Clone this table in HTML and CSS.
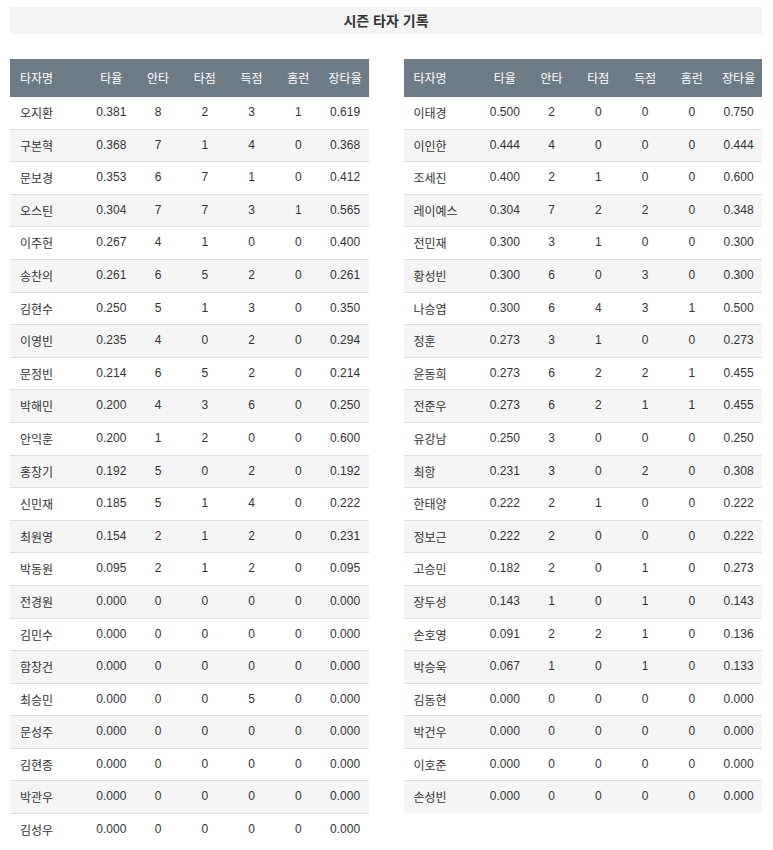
FILE: index.html
```html
<!DOCTYPE html>
<html lang="ko">
<head>
<meta charset="utf-8">
<title>시즌 타자 기록</title>
<link rel="stylesheet" href="styles.css">
</head>
<body>
<div class="page">
  <h1 class="title">시즌 타자 기록</h1>
  <div class="tables">
    <table class="stats">
      <colgroup><col class="c-name"><col><col><col><col><col><col></colgroup>
      <thead><tr><th class="name">타자명</th><th>타율</th><th>안타</th><th>타점</th><th>득점</th><th>홈런</th><th>장타율</th></tr></thead>
      <tbody>
        <tr><td class="name">오지환</td><td>0.381</td><td>8</td><td>2</td><td>3</td><td>1</td><td>0.619</td></tr>
        <tr><td class="name">구본혁</td><td>0.368</td><td>7</td><td>1</td><td>4</td><td>0</td><td>0.368</td></tr>
        <tr><td class="name">문보경</td><td>0.353</td><td>6</td><td>7</td><td>1</td><td>0</td><td>0.412</td></tr>
        <tr><td class="name">오스틴</td><td>0.304</td><td>7</td><td>7</td><td>3</td><td>1</td><td>0.565</td></tr>
        <tr><td class="name">이주헌</td><td>0.267</td><td>4</td><td>1</td><td>0</td><td>0</td><td>0.400</td></tr>
        <tr><td class="name">송찬의</td><td>0.261</td><td>6</td><td>5</td><td>2</td><td>0</td><td>0.261</td></tr>
        <tr><td class="name">김현수</td><td>0.250</td><td>5</td><td>1</td><td>3</td><td>0</td><td>0.350</td></tr>
        <tr><td class="name">이영빈</td><td>0.235</td><td>4</td><td>0</td><td>2</td><td>0</td><td>0.294</td></tr>
        <tr><td class="name">문정빈</td><td>0.214</td><td>6</td><td>5</td><td>2</td><td>0</td><td>0.214</td></tr>
        <tr><td class="name">박해민</td><td>0.200</td><td>4</td><td>3</td><td>6</td><td>0</td><td>0.250</td></tr>
        <tr><td class="name">안익훈</td><td>0.200</td><td>1</td><td>2</td><td>0</td><td>0</td><td>0.600</td></tr>
        <tr><td class="name">홍창기</td><td>0.192</td><td>5</td><td>0</td><td>2</td><td>0</td><td>0.192</td></tr>
        <tr><td class="name">신민재</td><td>0.185</td><td>5</td><td>1</td><td>4</td><td>0</td><td>0.222</td></tr>
        <tr><td class="name">최원영</td><td>0.154</td><td>2</td><td>1</td><td>2</td><td>0</td><td>0.231</td></tr>
        <tr><td class="name">박동원</td><td>0.095</td><td>2</td><td>1</td><td>2</td><td>0</td><td>0.095</td></tr>
        <tr><td class="name">전경원</td><td>0.000</td><td>0</td><td>0</td><td>0</td><td>0</td><td>0.000</td></tr>
        <tr><td class="name">김민수</td><td>0.000</td><td>0</td><td>0</td><td>0</td><td>0</td><td>0.000</td></tr>
        <tr><td class="name">함창건</td><td>0.000</td><td>0</td><td>0</td><td>0</td><td>0</td><td>0.000</td></tr>
        <tr><td class="name">최승민</td><td>0.000</td><td>0</td><td>0</td><td>5</td><td>0</td><td>0.000</td></tr>
        <tr><td class="name">문성주</td><td>0.000</td><td>0</td><td>0</td><td>0</td><td>0</td><td>0.000</td></tr>
        <tr><td class="name">김현종</td><td>0.000</td><td>0</td><td>0</td><td>0</td><td>0</td><td>0.000</td></tr>
        <tr><td class="name">박관우</td><td>0.000</td><td>0</td><td>0</td><td>0</td><td>0</td><td>0.000</td></tr>
        <tr><td class="name">김성우</td><td>0.000</td><td>0</td><td>0</td><td>0</td><td>0</td><td>0.000</td></tr>
      </tbody>
    </table>
    <table class="stats">
      <colgroup><col class="c-name"><col><col><col><col><col><col></colgroup>
      <thead><tr><th class="name">타자명</th><th>타율</th><th>안타</th><th>타점</th><th>득점</th><th>홈런</th><th>장타율</th></tr></thead>
      <tbody>
        <tr><td class="name">이태경</td><td>0.500</td><td>2</td><td>0</td><td>0</td><td>0</td><td>0.750</td></tr>
        <tr><td class="name">이인한</td><td>0.444</td><td>4</td><td>0</td><td>0</td><td>0</td><td>0.444</td></tr>
        <tr><td class="name">조세진</td><td>0.400</td><td>2</td><td>1</td><td>0</td><td>0</td><td>0.600</td></tr>
        <tr><td class="name">레이예스</td><td>0.304</td><td>7</td><td>2</td><td>2</td><td>0</td><td>0.348</td></tr>
        <tr><td class="name">전민재</td><td>0.300</td><td>3</td><td>1</td><td>0</td><td>0</td><td>0.300</td></tr>
        <tr><td class="name">황성빈</td><td>0.300</td><td>6</td><td>0</td><td>3</td><td>0</td><td>0.300</td></tr>
        <tr><td class="name">나승엽</td><td>0.300</td><td>6</td><td>4</td><td>3</td><td>1</td><td>0.500</td></tr>
        <tr><td class="name">정훈</td><td>0.273</td><td>3</td><td>1</td><td>0</td><td>0</td><td>0.273</td></tr>
        <tr><td class="name">윤동희</td><td>0.273</td><td>6</td><td>2</td><td>2</td><td>1</td><td>0.455</td></tr>
        <tr><td class="name">전준우</td><td>0.273</td><td>6</td><td>2</td><td>1</td><td>1</td><td>0.455</td></tr>
        <tr><td class="name">유강남</td><td>0.250</td><td>3</td><td>0</td><td>0</td><td>0</td><td>0.250</td></tr>
        <tr><td class="name">최항</td><td>0.231</td><td>3</td><td>0</td><td>2</td><td>0</td><td>0.308</td></tr>
        <tr><td class="name">한태양</td><td>0.222</td><td>2</td><td>1</td><td>0</td><td>0</td><td>0.222</td></tr>
        <tr><td class="name">정보근</td><td>0.222</td><td>2</td><td>0</td><td>0</td><td>0</td><td>0.222</td></tr>
        <tr><td class="name">고승민</td><td>0.182</td><td>2</td><td>0</td><td>1</td><td>0</td><td>0.273</td></tr>
        <tr><td class="name">장두성</td><td>0.143</td><td>1</td><td>0</td><td>1</td><td>0</td><td>0.143</td></tr>
        <tr><td class="name">손호영</td><td>0.091</td><td>2</td><td>2</td><td>1</td><td>0</td><td>0.136</td></tr>
        <tr><td class="name">박승욱</td><td>0.067</td><td>1</td><td>0</td><td>1</td><td>0</td><td>0.133</td></tr>
        <tr><td class="name">김동현</td><td>0.000</td><td>0</td><td>0</td><td>0</td><td>0</td><td>0.000</td></tr>
        <tr><td class="name">박건우</td><td>0.000</td><td>0</td><td>0</td><td>0</td><td>0</td><td>0.000</td></tr>
        <tr><td class="name">이호준</td><td>0.000</td><td>0</td><td>0</td><td>0</td><td>0</td><td>0.000</td></tr>
        <tr><td class="name">손성빈</td><td>0.000</td><td>0</td><td>0</td><td>0</td><td>0</td><td>0.000</td></tr>
      </tbody>
    </table>
  </div>
</div>
</body>
</html>
```
FILE: styles.css
```css
html, body {
  margin: 0;
  padding: 0;
  background: #fff;
}
body {
  font-family: "Liberation Sans", Arial, "Noto Sans CJK KR", sans-serif;
  color: #333;
  font-size: 12px;
}
.page {
  padding: 7px 11px 0 10px;
}
.title {
  margin: 0;
  background: #f4f4f4;
  height: 27px;
  line-height: 27px;
  text-align: center;
  font-size: 14px;
  font-weight: bold;
  color: #333;
  font-family: "Noto Sans CJK KR", sans-serif;
}
.tables {
  display: flex;
  gap: 35px;
  align-items: flex-start;
  margin-top: 25px;
}
.stats {
  flex: 1 1 0;
  width: 0;
  border-collapse: collapse;
  table-layout: fixed;
}
.c-name {
  width: 78px;
}
.stats th {
  background: #6d7b87;
  color: #fff;
  font-weight: normal;
  padding: 11px 0;
  line-height: 16px;
  text-align: center;
  font-family: "Noto Sans CJK KR", sans-serif;
}
.stats td {
  padding: 8px 0;
  line-height: 15.6px;
  text-align: center;
  border-bottom: 1px solid #dedede;
}
.stats th.name,
.stats td.name {
  text-align: left;
  padding-left: 10px;
}
.stats td.name {
  font-family: "Noto Sans CJK KR", sans-serif;
}
.stats tbody tr:nth-child(even) td {
  background: #f5f5f5;
}
.stats tbody tr:last-child td {
  border-bottom: none;
}
```
